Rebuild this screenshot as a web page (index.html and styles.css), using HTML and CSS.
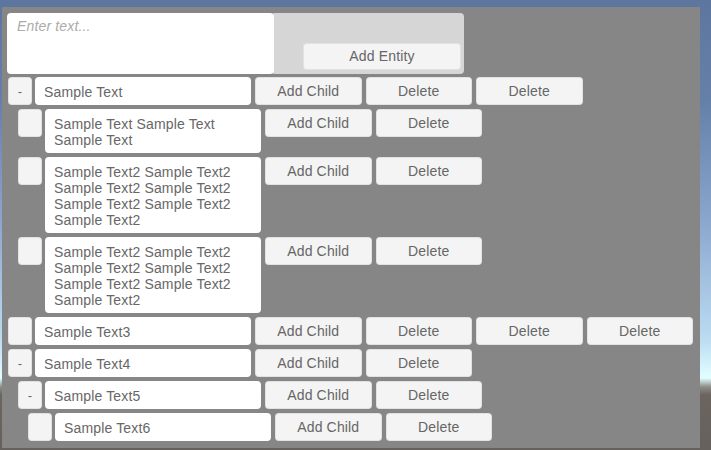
FILE: index.html
```html
<!DOCTYPE html>
<html>
<head>
<meta charset="utf-8">
<link rel="stylesheet" href="styles.css">
</head>
<body>
<div class="panel">
  <div class="header">
    <div class="entry"><span class="placeholder">Enter text...</span></div>
    <div class="entry-side"><div class="btn wide">Add Entity</div></div>
  </div>
  <div class="tree">
    <div class="row l0">
      <div class="toggle">-</div>
      <div class="field">Sample Text</div>
      <div class="btn">Add Child</div><div class="btn">Delete</div><div class="btn">Delete</div>
    </div>
    <div class="row l1">
      <div class="toggle"></div>
      <div class="field">Sample Text Sample Text<br>Sample Text</div>
      <div class="btn">Add Child</div><div class="btn">Delete</div>
    </div>
    <div class="row l1">
      <div class="toggle"></div>
      <div class="field">Sample Text2 Sample Text2<br>Sample Text2 Sample Text2<br>Sample Text2 Sample Text2<br>Sample Text2</div>
      <div class="btn">Add Child</div><div class="btn">Delete</div>
    </div>
    <div class="row l1">
      <div class="toggle"></div>
      <div class="field">Sample Text2 Sample Text2<br>Sample Text2 Sample Text2<br>Sample Text2 Sample Text2<br>Sample Text2</div>
      <div class="btn">Add Child</div><div class="btn">Delete</div>
    </div>
    <div class="row l0">
      <div class="toggle"></div>
      <div class="field">Sample Text3</div>
      <div class="btn">Add Child</div><div class="btn">Delete</div><div class="btn">Delete</div><div class="btn">Delete</div>
    </div>
    <div class="row l0">
      <div class="toggle">-</div>
      <div class="field">Sample Text4</div>
      <div class="btn">Add Child</div><div class="btn">Delete</div>
    </div>
    <div class="row l1">
      <div class="toggle">-</div>
      <div class="field">Sample Text5</div>
      <div class="btn">Add Child</div><div class="btn">Delete</div>
    </div>
    <div class="row l2">
      <div class="toggle"></div>
      <div class="field">Sample Text6</div>
      <div class="btn">Add Child</div><div class="btn">Delete</div>
    </div>
  </div>
</div>
</body>
</html>
```
FILE: styles.css
```css
html, body {
  margin: 0;
  padding: 0;
}
body {
  width: 711px;
  height: 450px;
  overflow: hidden;
  font-family: "Liberation Sans", Arial, sans-serif;
  font-size: 14px;
  letter-spacing: 0.15px;
  color: #666;
  background: linear-gradient(to bottom, #5c76a0 0, #6580a8 100px, #8aa6cd 220px, #bcdcf2 340px, #e2ffff 378px, #8c8c88 387px, #6b645f 395px, #66615d 450px);
}
.panel {
  margin: 7px 11px 0 2px;
  height: 441px;
  background: #868686;
  padding: 6px 0 0 5px;
  box-sizing: border-box;
}
.header {
  display: flex;
  height: 61px;
}
.entry {
  width: 267px;
  background: #fff;
  border-radius: 4px;
  padding: 5px 10px;
  box-sizing: border-box;
  position: relative;
  z-index: 1;
}
.placeholder {
  color: #ababab;
  font-style: italic;
}
.entry-side {
  width: 193px;
  margin-left: -3px;
  background: #d6d6d6;
  border-radius: 4px;
  display: flex;
  align-items: flex-end;
  justify-content: flex-end;
  padding: 0 3px 4px 0;
  box-sizing: border-box;
}
.tree {
  display: flex;
  flex-direction: column;
  gap: 4px;
  margin-top: 3px;
  padding-left: 1px;
}
.row {
  display: flex;
  align-items: flex-start;
  gap: 4px;
}
.row.l1 { padding-left: 10px; }
.row.l2 { padding-left: 20px; }
.toggle {
  width: 24px;
  height: 28px;
  margin-right: -1px;
  background: #f4f4f4;
  border-radius: 4px;
  box-shadow: inset 0 0 0 1px rgba(0,0,0,0.07);
  display: flex;
  align-items: center;
  justify-content: center;
  color: #6a6a6a;
  font-size: 13px;
  line-height: 1;
  flex: none;
}
.field {
  width: 216px;
  background: #fff;
  border-radius: 4px;
  padding: 7px 9px 5px;
  line-height: 16px;
  box-sizing: border-box;
  min-height: 28px;
  flex: none;
  color: #676767;
}
.btn {
  width: 106.5px;
  height: 28px;
  background: #f4f4f4;
  border-radius: 4px;
  box-shadow: inset 0 0 0 1px rgba(0,0,0,0.07);
  display: flex;
  align-items: center;
  justify-content: center;
  color: #666;
  flex: none;
  box-sizing: border-box;
  padding-bottom: 1px;
}
.btn.wide {
  width: 158px;
  height: 27px;
}
```
